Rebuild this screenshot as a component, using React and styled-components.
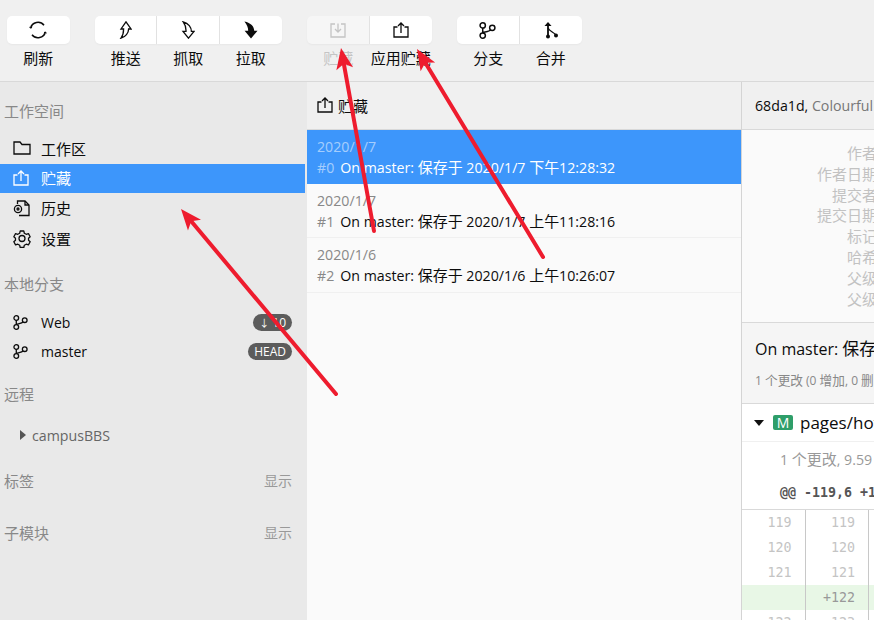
import styled, { createGlobalStyle } from "styled-components";

const GlobalStyle = createGlobalStyle`
  html, body {
    margin: 0;
    padding: 0;
    height: 100%;
    overflow: hidden;
    background: #f0f0f0;
    font-family: "Open Sans", "Noto Sans CJK SC", sans-serif;
    font-size: 14.2px;
    color: #0c0c0c;
  }
  * { box-sizing: border-box; }
`;

const Page = styled.div`
  position: relative;
  width: 874px;
  height: 620px;
  overflow: hidden;
  display: flex;
  flex-direction: column;
`;

// the Chinese runs sit a touch larger than the Latin ones around them
const Cjk = styled.span`
  font-size: 1.056em;
`;

const Toolbar = styled.header`
  height: 82px;
  flex: none;
  display: flex;
  gap: 25px;
  padding: 16px 0 0 7px;
  background: #f0f0f0;
  border-bottom: 1px solid #d9d9d9;
`;

const ToolGroup = styled.div`
  display: flex;
`;

const Tool = styled.div`
  width: 62.5px;
  display: flex;
  flex-direction: column;
  align-items: center;
  color: ${(p) => (p.$disabled ? "#c4c4c4" : "#0c0c0c")};
  white-space: nowrap;
`;

const ToolFace = styled.div`
  width: 100%;
  height: 28px;
  display: flex;
  align-items: center;
  justify-content: center;
  background: ${(p) => (p.$disabled ? "#f6f6f6" : "#fff")};
  border-right: ${(p) => (p.$last ? "none" : "1px solid #e4e4e4")};
  border-radius: ${(p) => (p.$first ? "5px 0 0 5px" : "0")};
  border-top-right-radius: ${(p) => (p.$last ? "5px" : "0")};
  border-bottom-right-radius: ${(p) => (p.$last ? "5px" : "0")};
  box-shadow: 0 1px 2px rgba(0, 0, 0, 0.04);
`;

const ToolLabel = styled.span`
  margin-top: 4px;
  font-size: 15px;
  line-height: 20px;
`;

const Body = styled.div`
  flex: 1;
  min-height: 0;
  display: flex;
`;

const Sidebar = styled.aside`
  width: 307px;
  flex: none;
  padding-right: 2px;
  background: #e9e9e9;
`;

const SectionTitle = styled.div`
  display: flex;
  justify-content: space-between;
  align-items: center;
  height: 20px;
  padding: 0 13px 0 4px;
  margin-top: ${(p) => p.$top}px;
  color: #888;
  font-size: 15px;
`;

const ShowLink = styled.span`
  font-size: 14px;
  color: #999;
`;

const NavList = styled.div`
  display: flex;
  flex-direction: column;
  margin-top: ${(p) => p.$top}px;
`;

const NavRow = styled.div`
  height: ${(p) => p.$h || 30}px;
  display: flex;
  align-items: center;
  gap: 10px;
  padding: 0 13px 2px 13px;
  color: ${(p) => (p.$active ? "#fff" : "#0c0c0c")};
  background: ${(p) => (p.$active ? "#3d96fb" : "transparent")};
`;

const NavIcon = styled.span`
  width: 18px;
  display: flex;
  align-items: center;
`;

const NavLabel = styled.span`
  flex: 1;
  font-size: ${(p) => (p.$latin ? 14 : 15)}px;
`;

const Badge = styled.span`
  height: 17px;
  padding: 0 6px;
  border-radius: 9px;
  background: #5c5c5c;
  color: #fff;
  font-size: 12px;
  line-height: 17px;
  white-space: nowrap;
`;

const BadgeArrow = styled.span`
  font-size: 10px;
`;

const RemoteRow = styled.div`
  display: flex;
  align-items: center;
  gap: 6px;
  height: 20px;
  margin-top: 22px;
  padding-left: 20px;
  color: #666;
`;

const Triangle = styled.i`
  width: 0;
  height: 0;
  border-left: 6px solid #555;
  border-top: 5px solid transparent;
  border-bottom: 5px solid transparent;
`;

const Middle = styled.section`
  width: 434px;
  flex: none;
  background: #fafafa;
`;

const PaneHeader = styled.div`
  height: 48px;
  display: flex;
  align-items: center;
  gap: 5px;
  padding: 0 0 1px 10px;
  background: #f0f0f0;
  border-bottom: 1px solid #d9d9d9;
  white-space: nowrap;
`;

const StashRow = styled.div`
  height: ${(p) => p.$h || 54}px;
  padding: 6px 10px 0;
  background: ${(p) => (p.$active ? "#3d96fb" : "#fafafa")};
  border-bottom: 1px solid ${(p) => (p.$active ? "#3d96fb" : "#f0f0f0")};
  color: ${(p) => (p.$active ? "#fff" : "#0c0c0c")};
  white-space: nowrap;
`;

const StashDate = styled.div`
  line-height: 21px;
  color: ${(p) => (p.$active ? "rgba(255,255,255,0.55)" : "#888")};
`;

const StashLine = styled.div`
  line-height: 21px;
`;

const StashIndex = styled.span`
  margin-right: 6px;
  color: ${(p) => (p.$active ? "rgba(255,255,255,0.55)" : "#888")};
`;

const Detail = styled.section`
  flex: 1;
  min-width: 0;
  overflow: hidden;
  border-left: 1px solid #d4d4d4;
  background: #fafafa;
`;

const DetailInner = styled.div`
  width: 600px;
`;

const DetailHeader = styled(PaneHeader)`
  padding-left: 13px;
  gap: 0;
`;

const Muted = styled.span`
  color: #777;
`;

const Meta = styled.div`
  height: 193px;
  padding-top: 13px;
  border-bottom: 1px solid #d9d9d9;
`;

const MetaLabel = styled.div`
  width: 135px;
  height: 20.8px;
  font-size: 15px;
  line-height: 20.8px;
  text-align: right;
  color: #c2c2c2;
`;

const Summary = styled.div`
  height: 81px;
  padding: 14px 13px 0;
  background: #f5f5f5;
  border-bottom: 1px solid #d9d9d9;
`;

const SummaryTitle = styled.div`
  font-size: 16px;
  line-height: 24px;
`;

const SummaryStats = styled.div`
  margin-top: 10px;
  font-size: 12px;
  line-height: 18px;
  color: #888;
`;

const FileRow = styled.div`
  height: 38px;
  display: flex;
  align-items: center;
  padding-left: 12px;
  background: #fff;
  border-bottom: 1px solid #f0f0f0;
  font-size: 17px;
`;

const Caret = styled.i`
  width: 0;
  height: 0;
  margin-right: 9px;
  border-top: 6px solid #111;
  border-left: 5px solid transparent;
  border-right: 5px solid transparent;
`;

const FileBadge = styled.span`
  width: 20px;
  height: 15px;
  margin-right: 7px;
  border-radius: 2px;
  background: #2e9e69;
  color: #fff;
  font-size: 14px;
  line-height: 15px;
  text-align: center;
`;

const DiffStats = styled.div`
  height: 34px;
  padding-left: 38px;
  line-height: 34px;
  background: #fff;
  color: #999;
  white-space: nowrap;
`;

const HunkHeader = styled.div`
  height: 34px;
  padding-left: 38px;
  line-height: 34px;
  background: #fff;
  border-bottom: 1px solid #d9d9d9;
  font-family: "DejaVu Sans Mono", monospace;
  font-size: 13.3px;
  font-weight: 700;
  color: #555;
`;

const DiffRow = styled.div`
  display: flex;
  height: 25px;
  background: ${(p) => (p.$added ? "#e8f7e6" : "#fff")};
`;

const LineNo = styled.div`
  width: 63.5px;
  padding-right: 13px;
  line-height: 25px;
  text-align: right;
  border-right: 1px solid #c8c8c8;
  font-family: "DejaVu Sans Mono", monospace;
  font-size: 13.3px;
  color: ${(p) => (p.$added ? "#999" : "#c4c4c4")};
`;

const Overlay = styled.svg`
  position: absolute;
  left: 0;
  top: 0;
  pointer-events: none;
`;

const stroke = { fill: "none", stroke: "currentColor", strokeWidth: 1.3 };

const RefreshIcon = () => (
  <svg width="18" height="18" viewBox="0 0 18 18" {...stroke} strokeWidth="1.5">
    <path d="M1.6 7A7.6 7.6 0 0 1 15 4.2" />
    <path d="M16.4 11A7.6 7.6 0 0 1 3 13.8" />
    <path d="M.4 5.8l1.3 1.5 1.5-1.3M14.8 12.2l1.5-1.3 1.3 1.5" strokeWidth="1" />
  </svg>
);

const PushIcon = () => (
  <svg width="14" height="18" viewBox="0 0 14 18" {...stroke}>
    <path d="M8 .8L13 8H10.6C10.6 12 7.5 16 3 17.2C5 14.5 5.6 11.5 5.6 8H3Z" />
  </svg>
);

const FetchIcon = () => (
  <svg width="14" height="18" viewBox="0 0 14 18" {...stroke}>
    <path d="M7.5 17.2L13 10.4H10.4C10.4 6.5 7.5 2.2 2.2 .8C4.2 3.5 5.2 6.8 5 10.4H2Z" />
  </svg>
);

const PullIcon = () => (
  <svg width="15" height="18" viewBox="0 0 15 18">
    <path d="M8 17.4L14.5 9.8H11.2C11.2 5.8 8 1.8 1.4 .6C3.8 3.5 5.2 6.6 5.2 9.8H1.6Z" fill="currentColor" />
  </svg>
);

const StashInIcon = () => (
  <svg width="16" height="16" viewBox="0 0 16 16" {...stroke}>
    <path d="M5 2H1v13h14V2h-4" />
    <path d="M8 1.5v8M5 7l3 3 3-3" />
  </svg>
);

const StashOutIcon = ({ size = 16 }) => (
  <svg width={size} height={size} viewBox="0 0 16 16" {...stroke}>
    <path d="M4.5 5H1v10h14V5h-3.5" />
    <path d="M8 11V1.5M5 4l3-3 3 3" />
  </svg>
);

const BranchIcon = ({ size = 16 }) => (
  <svg width={size} height={size} viewBox="0 0 16 16" {...stroke} strokeWidth="1.4">
    <circle cx="3.5" cy="3.2" r="2.5" />
    <circle cx="3.5" cy="12.8" r="2.5" />
    <circle cx="12.5" cy="5.5" r="2.5" />
    <path d="M3.5 5.7v4.6M3.8 9.8c2.5-.6 6-.8 7.2-2.4" />
  </svg>
);

const MergeIcon = () => (
  <svg width="16" height="18" viewBox="0 0 16 18" fill="currentColor">
    <path d="M5 1L1.5 5h2.6v9h1.8V5h2.6z" />
    <circle cx="5" cy="15.5" r="2" />
    <circle cx="13" cy="14.5" r="2" />
    <path d="M5 7c1 3 5 4 7.5 6.5" fill="none" stroke="currentColor" strokeWidth="1.3" />
  </svg>
);

const FolderIcon = () => (
  <svg width="18" height="14" viewBox="0 0 18 14" {...stroke}>
    <path d="M1 1h6l2 2.5h8v9.5H1z" />
  </svg>
);

const HistoryIcon = () => (
  <svg width="18" height="18" viewBox="0 0 18 18" {...stroke}>
    <path d="M4.5 5V2h7.5l4 4v10.5H6" />
    <path d="M12 2v4h4" />
    <circle cx="5" cy="10" r="3.6" />
    <circle cx="5" cy="10" r="1" />
  </svg>
);

const GearIcon = () => (
  <svg width="19" height="19" viewBox="0 0 24 24" fill="none" stroke="currentColor" strokeWidth="1.7">
    <path d="M9.6 2h4.8l.7 3 2.5 1.4 3-.9 2.3 4.1-2.2 2.1v2.6l2.2 2.1-2.3 4.1-3-.9-2.5 1.4-.7 3H9.6l-.7-3-2.5-1.4-3 .9-2.3-4.1 2.2-2.1v-2.6L1.1 9.6l2.3-4.1 3 .9 2.5-1.4z" strokeLinejoin="round" />
    <circle cx="12" cy="12" r="4" />
  </svg>
);

const Arrow = ({ x1, y1, x2, y2 }) => {
  // the head is drawn on the line's own axis, so all three arrows share it
  const len = Math.hypot(x2 - x1, y2 - y1);
  const ux = (x2 - x1) / len;
  const uy = (y2 - y1) / len;
  const bx = x2 - ux * 21;
  const by = y2 - uy * 21;
  const head = [
    [x2, y2],
    [bx - uy * 8.5, by + ux * 8.5],
    [x2 - ux * 16, y2 - uy * 16],
    [bx + uy * 8.5, by - ux * 8.5],
  ]
    .map((p) => p.join(","))
    .join(" ");
  return (
    <g fill="#ee1c2e" stroke="#ee1c2e">
      <line x1={x1} y1={y1} x2={x2 - ux * 14} y2={y2 - uy * 14} strokeWidth="4" strokeLinecap="round" />
      <polygon points={head} strokeWidth="0" />
    </g>
  );
};

// wraps each Chinese run of a mixed string in <Cjk>
const Mixed = ({ text }) =>
  text.split(/([\u4e00-\u9fff]+)/).map((part, i) =>
    i % 2 ? <Cjk key={i}>{part}</Cjk> : part
  );

const tools = [
  [{ label: "刷新", icon: <RefreshIcon /> }],
  [
    { label: "推送", icon: <PushIcon /> },
    { label: "抓取", icon: <FetchIcon /> },
    { label: "拉取", icon: <PullIcon /> },
  ],
  [
    { label: "贮藏", icon: <StashInIcon />, disabled: true },
    { label: "应用贮藏", icon: <StashOutIcon /> },
  ],
  [
    { label: "分支", icon: <BranchIcon size={17} /> },
    { label: "合并", icon: <MergeIcon /> },
  ],
];

const stashes = [
  { date: "2020/1/7", text: "On master: 保存于 2020/1/7 下午12:28:32" },
  { date: "2020/1/7", text: "On master: 保存于 2020/1/7 上午11:28:16" },
  { date: "2020/1/6", text: "On master: 保存于 2020/1/6 上午10:26:07" },
];

const metaLabels = ["作者", "作者日期", "提交者", "提交日期", "标记", "哈希", "父级", "父级"];

const diffLines = [
  ["119", "119"],
  ["120", "120"],
  ["121", "121"],
  ["", "+122"],
  ["122", "123"],
];

const App = () => {
  return (
    <Page>
      <GlobalStyle />
      <Toolbar>
        {tools.map((group, g) => (
          <ToolGroup key={g}>
            {group.map((tool, i) => (
              <Tool key={tool.label} $disabled={tool.disabled}>
                <ToolFace $first={i === 0} $last={i === group.length - 1} $disabled={tool.disabled}>
                  {tool.icon}
                </ToolFace>
                <ToolLabel>{tool.label}</ToolLabel>
              </Tool>
            ))}
          </ToolGroup>
        ))}
      </Toolbar>
      <Body>
        <Sidebar>
          <SectionTitle $top={18}>工作空间</SectionTitle>
          <NavList $top={14}>
            <NavRow><NavIcon><FolderIcon /></NavIcon><NavLabel>工作区</NavLabel></NavRow>
            <NavRow $h={29} $active><NavIcon><StashOutIcon /></NavIcon><NavLabel>贮藏</NavLabel></NavRow>
            <NavRow $h={31}><NavIcon><HistoryIcon /></NavIcon><NavLabel>历史</NavLabel></NavRow>
            <NavRow><NavIcon><GearIcon /></NavIcon><NavLabel>设置</NavLabel></NavRow>
          </NavList>
          <SectionTitle $top={19}>本地分支</SectionTitle>
          <NavList $top={16}>
            <NavRow $h={29}>
              <NavIcon><BranchIcon size={15} /></NavIcon>
              <NavLabel $latin>Web</NavLabel>
              <Badge><BadgeArrow>↓</BadgeArrow> 10</Badge>
            </NavRow>
            <NavRow $h={29}>
              <NavIcon><BranchIcon size={15} /></NavIcon>
              <NavLabel $latin>master</NavLabel>
              <Badge>HEAD</Badge>
            </NavRow>
          </NavList>
          <SectionTitle $top={16}>远程</SectionTitle>
          <RemoteRow><Triangle />campusBBS</RemoteRow>
          <SectionTitle $top={25}>标签<ShowLink>显示</ShowLink></SectionTitle>
          <SectionTitle $top={32}>子模块<ShowLink>显示</ShowLink></SectionTitle>
        </Sidebar>
        <Middle>
          <PaneHeader><StashOutIcon /><Cjk>贮藏</Cjk></PaneHeader>
          {stashes.map((s, i) => (
            <StashRow key={i} $active={i === 0} $h={i === 2 ? 55 : 54}>
              <StashDate $active={i === 0}>{s.date}</StashDate>
              <StashLine>
                <StashIndex $active={i === 0}>#{i}</StashIndex>
                <Mixed text={s.text} />
              </StashLine>
            </StashRow>
          ))}
        </Middle>
        <Detail>
          <DetailInner>
            <DetailHeader>68da1d,&nbsp;<Muted>Colourful Stash Commit</Muted></DetailHeader>
            <Meta>
              {metaLabels.map((label, i) => (
                <MetaLabel key={i}>{label}</MetaLabel>
              ))}
            </Meta>
            <Summary>
              <SummaryTitle><Mixed text="On master: 保存于 2020/1/7 下午12:28:32" /></SummaryTitle>
              <SummaryStats><Mixed text="1 个更改 (0 增加, 0 删除)" /></SummaryStats>
            </Summary>
            <FileRow><Caret /><FileBadge>M</FileBadge>pages/hot/hot.vue</FileRow>
            <DiffStats><Mixed text="1 个更改, 9.59 KB" /></DiffStats>
            <HunkHeader>@@ -119,6 +119,7 @@</HunkHeader>
            {diffLines.map(([a, b], i) => (
              <DiffRow key={i} $added={a === ""}>
                <LineNo $added={a === ""}>{a}</LineNo>
                <LineNo $added={a === ""}>{b}</LineNo>
              </DiffRow>
            ))}
          </DetailInner>
        </Detail>
      </Body>
      <Overlay width="874" height="620" viewBox="0 0 874 620">
        <Arrow x1={336} y1={394} x2={181} y2={209} />
        <Arrow x1={374} y1={231} x2={341} y2={48} />
        <Arrow x1={543} y1={257} x2={417} y2={49} />
      </Overlay>
    </Page>
  );
};

export default App;
